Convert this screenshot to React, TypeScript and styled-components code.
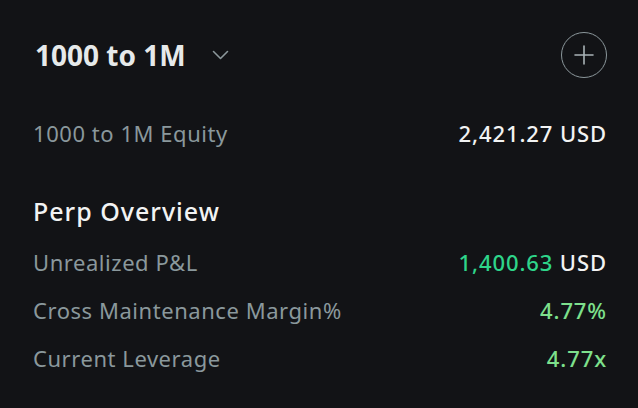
import React from "react";
import styled, { createGlobalStyle } from "styled-components";

const Global = createGlobalStyle`
  html, body {
    margin: 0;
    padding: 0;
    background: #121316;
  }
  body {
    font-family: "Noto Sans", "Liberation Sans", sans-serif;
    -webkit-font-smoothing: antialiased;
  }
`;

const Panel = styled.div`
  width: 638px;
  height: 408px;
  box-sizing: border-box;
  padding: 32px 31px 0 33px;
  background: #121316;
  display: flex;
  flex-direction: column;
`;

const Header = styled.div`
  display: flex;
  align-items: center;
  justify-content: space-between;
  height: 46px;
`;

const TitleGroup = styled.button`
  display: flex;
  align-items: center;
  gap: 26px;
  background: none;
  border: none;
  padding: 0 0 0 2px;
  cursor: pointer;
  font-family: inherit;
`;

const Title = styled.span`
  font-size: 28px;
  font-weight: 700;
  color: #e6e9ea;
  line-height: 1;
`;

const AddButton = styled.button`
  width: 46px;
  height: 46px;
  border-radius: 50%;
  border: 1.5px solid #8b979b;
  background: transparent;
  display: flex;
  align-items: center;
  justify-content: center;
  padding: 0;
`;

const Row = styled.div`
  display: flex;
  align-items: center;
  justify-content: space-between;
  height: 48px;
  line-height: 48px;
  font-size: 22px;
`;

const Label = styled.span`
  color: #8a989c;
  letter-spacing: 0.55px;
`;

const Value = styled.span<{ $tone?: "white" | "pnl" | "pos" }>`
  font-weight: 500;
  letter-spacing: 0.9px;
  color: ${(p) =>
    p.$tone === "pnl" ? "#2ed58a" : p.$tone === "pos" ? "#7de08c" : "#f2f3f3"};
`;

const SectionTitle = styled.div`
  font-size: 25px;
  font-weight: 500;
  letter-spacing: 1px;
  color: #f2f3f3;
  height: 48px;
  line-height: 48px;
  margin-top: 30px;
  margin-bottom: 3px;
`;

const Spacer = styled.div<{ $h: number }>`
  height: ${(p) => p.$h}px;
  flex: none;
`;

export default function App() {
  return (
    <>
      <Global />
      <Panel>
        <Header>
          <TitleGroup>
            <Title>1000 to 1M</Title>
            <svg width="17" height="10" viewBox="0 0 17 10" fill="none">
              <path d="M1.5 1.5 L8.5 8.5 L15.5 1.5" stroke="#8b979b" strokeWidth="1.6" strokeLinecap="round" strokeLinejoin="round" />
            </svg>
          </TitleGroup>
          <AddButton aria-label="Add">
            <svg width="20" height="20" viewBox="0 0 20 20" fill="none">
              <path d="M10 1 V19 M1 10 H19" stroke="#a9b3b6" strokeWidth="1.6" strokeLinecap="round" />
            </svg>
          </AddButton>
        </Header>
        <Spacer $h={31} />
        <Row>
          <Label>1000 to 1M Equity</Label>
          <Value>2,421.27 USD</Value>
        </Row>
        <SectionTitle>Perp Overview</SectionTitle>
        <Row>
          <Label>Unrealized P&amp;L</Label>
          <Value>
            <Value $tone="pnl">1,400.63</Value> USD
          </Value>
        </Row>
        <Row>
          <Label>Cross Maintenance Margin%</Label>
          <Value $tone="pos">4.77%</Value>
        </Row>
        <Row>
          <Label>Current Leverage</Label>
          <Value $tone="pos">4.77x</Value>
        </Row>
      </Panel>
    </>
  );
}
